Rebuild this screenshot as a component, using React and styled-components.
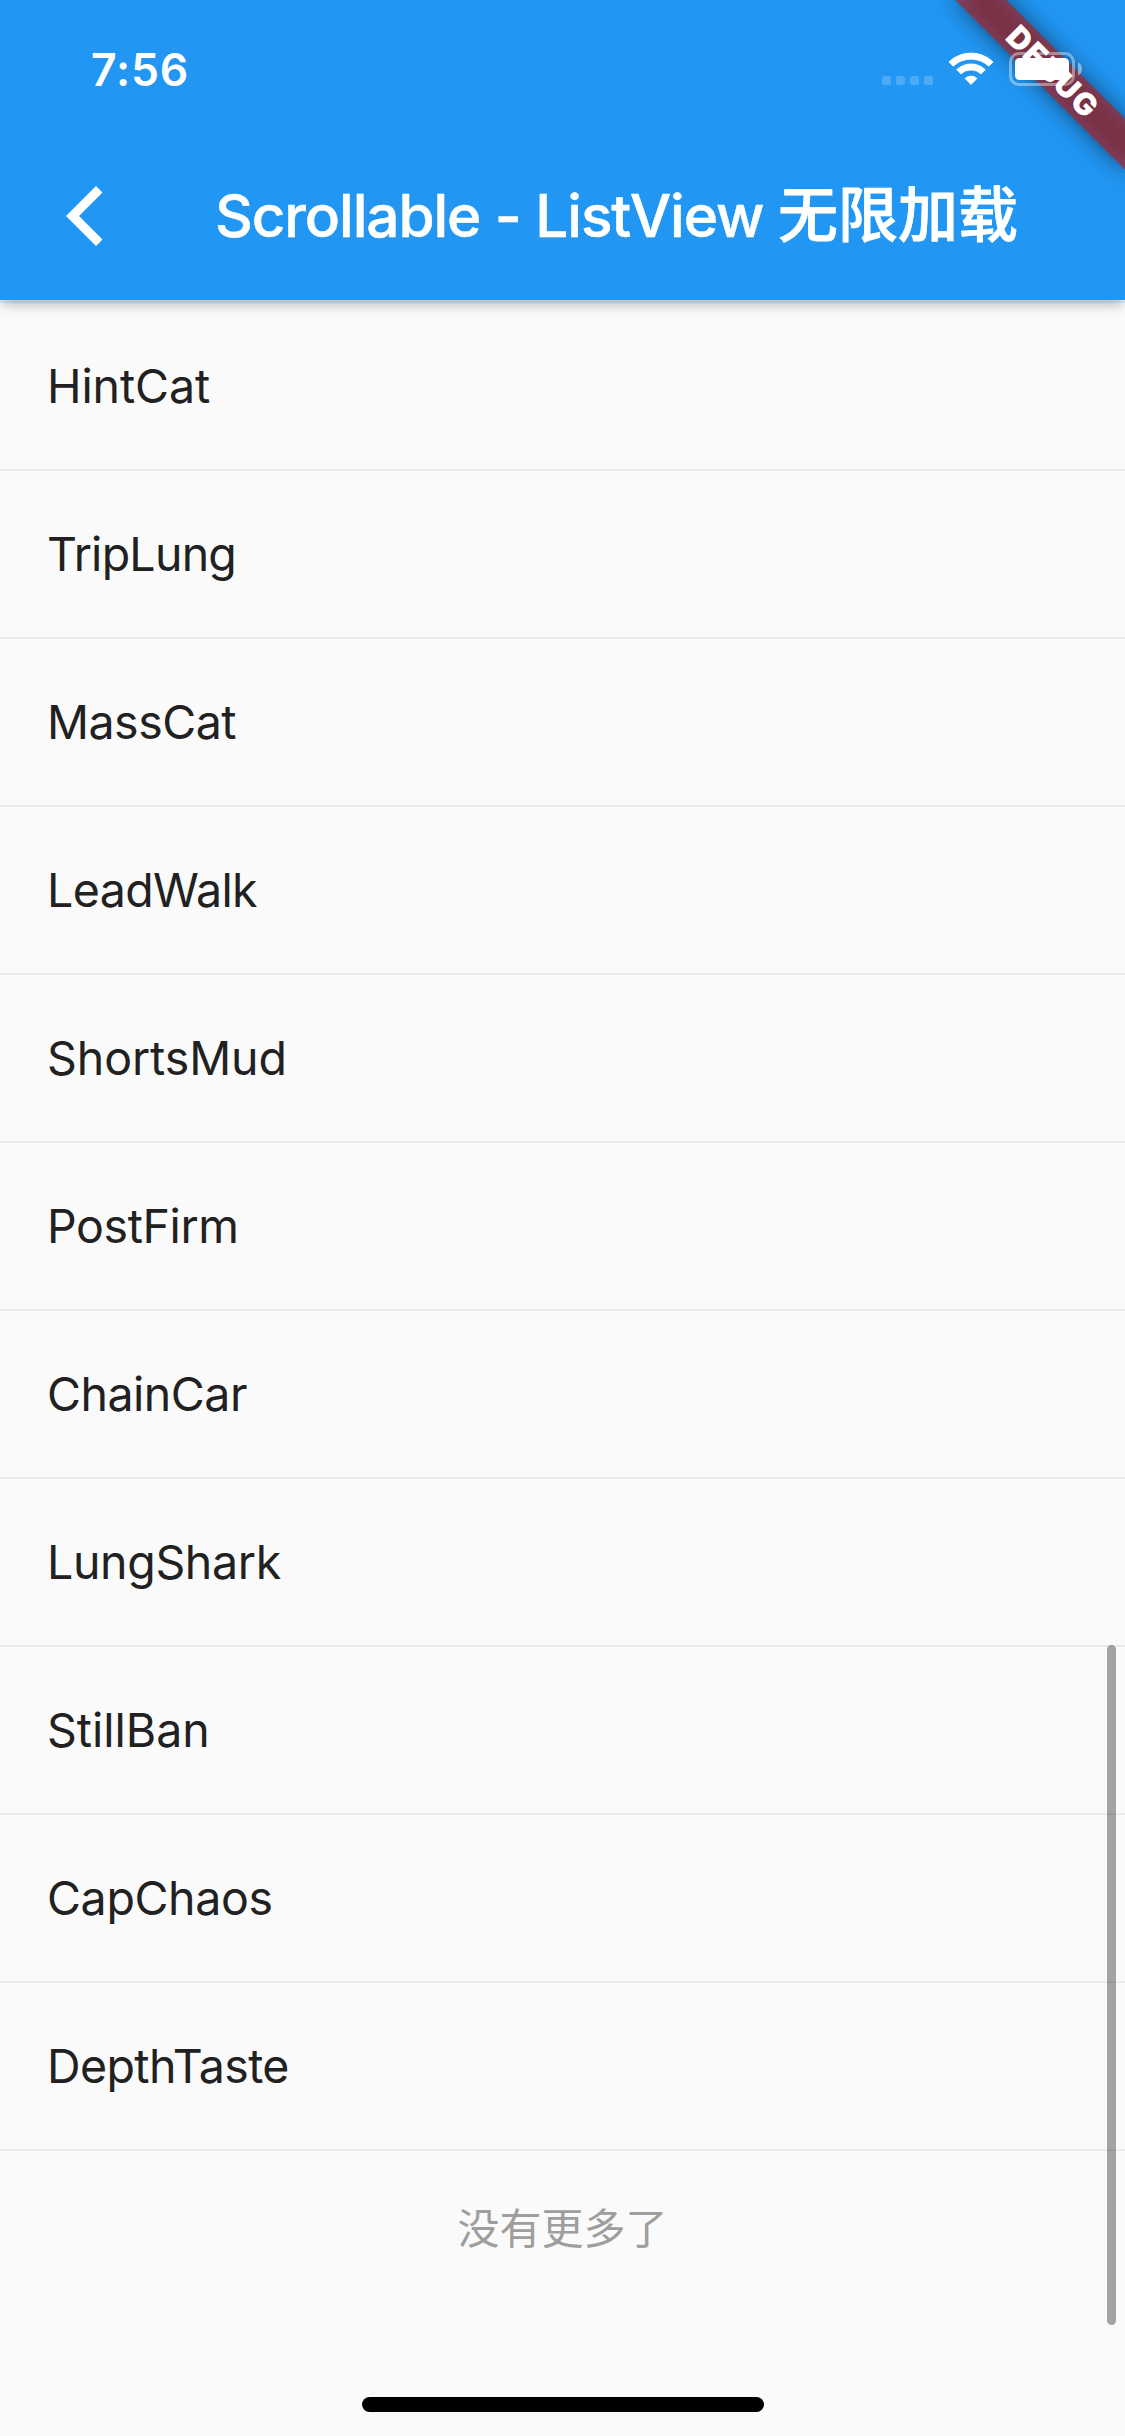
import React from "react";
import styled, { createGlobalStyle } from "styled-components";

const GlobalStyle = createGlobalStyle`
  body {
    margin: 0;
    background: #fafafa;
  }
`;

const Screen = styled.div`
  position: relative;
  display: flex;
  flex-direction: column;
  width: 1125px;
  height: 2436px;
  overflow: hidden;
  background: #fafafa;
  color: #212121;
  font-family: Inter, "Noto Sans CJK SC", sans-serif;
`;

const Header = styled.header`
  position: relative;
  z-index: 1;
  flex: none;
  height: 300px;
  background: #2196f3;
  color: #fff;
  box-shadow: 0 6px 12px -3px rgba(0, 0, 0, 0.2),
    0 3px 15px rgba(0, 0, 0, 0.14);
`;

const StatusBar = styled.div`
  display: flex;
  align-items: center;
  justify-content: space-between;
  box-sizing: border-box;
  height: 132px;
  padding: 7px 43px 0 91px;
`;

const Clock = styled.span`
  font-size: 44.5px;
  font-weight: 600;
  line-height: 60px;
  letter-spacing: 0.8px;
`;

const StatusIcons = styled.svg`
  display: block;
  width: 210px;
  height: 60px;
`;

const StatusOverlay = styled.div`
  position: absolute;
  z-index: 4;
  top: 40px;
  right: 35px;
`;

const NavBar = styled.div`
  display: flex;
  align-items: center;
  height: 168px;
`;

const BackButton = styled.button`
  display: flex;
  align-items: center;
  flex: none;
  width: 215px;
  height: 168px;
  padding: 0 0 0 66px;
  border: 0;
  background: none;
  color: inherit;
`;

const Title = styled.h1`
  display: flex;
  align-items: baseline;
  margin: 0;
  padding-bottom: 5px;
  font-size: 58.5px;
  font-weight: 500;
  line-height: 72px;
  letter-spacing: -1.1px;
  white-space: pre;
  -webkit-text-stroke: 0.5px #fff;
`;

const TitleCjk = styled.span`
  font-family: "Noto Sans CJK SC", sans-serif;
  font-size: 60px;
  letter-spacing: 0;
  -webkit-text-stroke: 0.8px #fff;
`;

const List = styled.ul`
  flex: none;
  margin: 1px 0 0;
  padding: 0;
  border-top: 2px solid #ebebeb;
  list-style: none;
`;

const Row = styled.li`
  display: flex;
  align-items: center;
  box-sizing: border-box;
  height: 168px;
  padding: 0 47px;
  border-bottom: 2px solid #ebebeb;
  font-size: 46.5px;
  letter-spacing: ${(p) => p.$tracking}px;
`;

const EndNote = styled.p`
  margin: 48px 0 0;
  color: #9e9e9e;
  font-size: 42px;
  line-height: 60px;
  text-align: center;
`;

const ScrollThumb = styled.div`
  position: absolute;
  top: 1645px;
  right: 9px;
  width: 9px;
  height: 680px;
  border-radius: 4.5px;
  background: rgba(0, 0, 0, 0.35);
`;

const HomeIndicator = styled.div`
  align-self: center;
  width: 402px;
  height: 15px;
  margin: auto 0 24px;
  border-radius: 8px;
  background: #000;
`;

const Ribbon = styled.div`
  position: absolute;
  z-index: 3;
  top: 84px;
  left: 1005px;
  display: flex;
  align-items: center;
  justify-content: center;
  width: 240px;
  height: 36px;
  color: #fff;
  font-size: 31px;
  font-weight: 900;
  line-height: 36px;
  letter-spacing: 1.7px;
  transform: rotate(45deg);
  transform-origin: 120px -84px;

  &::before,
  &::after {
    content: "";
    position: absolute;
    inset: 0;
  }

  &::before {
    background: rgba(0, 0, 0, 0.5);
    filter: blur(11.9px);
  }

  &::after {
    background: rgba(183, 28, 28, 0.627);
  }
`;

const RibbonLabel = styled.span`
  position: relative;
  z-index: 1;
`;

const ITEMS = [
  { name: "HintCat", tracking: -0.1 },
  { name: "TripLung", tracking: -0.75 },
  { name: "MassCat", tracking: -0.5 },
  { name: "LeadWalk", tracking: -0.6 },
  { name: "ShortsMud", tracking: -0.1 },
  { name: "PostFirm", tracking: -0.4 },
  { name: "ChainCar", tracking: -0.5 },
  { name: "LungShark", tracking: -0.35 },
  { name: "StillBan", tracking: 0 },
  { name: "CapChaos", tracking: -0.35 },
  { name: "DepthTaste", tracking: -0.6 },
];

const SIGNAL_DOTS = [882, 896, 910, 924];

function StatusGlyphs() {
  return (
    <StatusIcons viewBox="880 40 210 60" fill="#fff">
      {SIGNAL_DOTS.map((x) => (
        <rect key={x} x={x} y="76" width="9" height="9" rx="2.5" opacity="0.2" />
      ))}
      <g stroke="#fff" strokeWidth="0.8" strokeLinejoin="round">
        <path d="M948.9 61.9A32 32 0 0 1 993.1 61.9L988.8 66.2A26 26 0 0 0 953.2 66.2Z" />
        <path d="M956.7 69.7A20.6 20.6 0 0 1 985.3 69.7L981 73.9A14.6 14.6 0 0 0 961 73.9Z" />
        <path d="M965 78.4A9 9 0 0 1 977 78.4L971 84.5Z" />
      </g>
      <rect x="1010.5" y="53.5" width="63" height="31" rx="8.5" fill="none" stroke="#fff" strokeWidth="3" opacity="0.4" />
      <rect x="1015" y="58" width="54" height="22" rx="4.5" />
      <path d="M1078 62.5C1080.5 63.5 1082 66 1082 69C1082 72 1080.5 74.5 1078 75.5Z" opacity="0.45" />
    </StatusIcons>
  );
}

export default function App() {
  return (
    <Screen>
      <GlobalStyle />
      <Header>
        <StatusBar>
          <Clock>7:56</Clock>
        </StatusBar>
        <NavBar>
          <BackButton aria-label="Back">
            <svg width="37" height="60" viewBox="0 0 37 60" fill="#fff">
              <path d="M0 30L30 0L36.5 6.5L13 30L36.5 53.5L30 60Z" />
            </svg>
          </BackButton>
          <Title>
            Scrollable - ListView <TitleCjk>无限加载</TitleCjk>
          </Title>
        </NavBar>
      </Header>
      <List>
        {ITEMS.map(({ name, tracking }) => (
          <Row key={name} $tracking={tracking}>
            {name}
          </Row>
        ))}
      </List>
      <EndNote>没有更多了</EndNote>
      <HomeIndicator />
      <ScrollThumb />
      <Ribbon>
        <RibbonLabel>DEBUG</RibbonLabel>
      </Ribbon>
      <StatusOverlay>
        <StatusGlyphs />
      </StatusOverlay>
    </Screen>
  );
}
